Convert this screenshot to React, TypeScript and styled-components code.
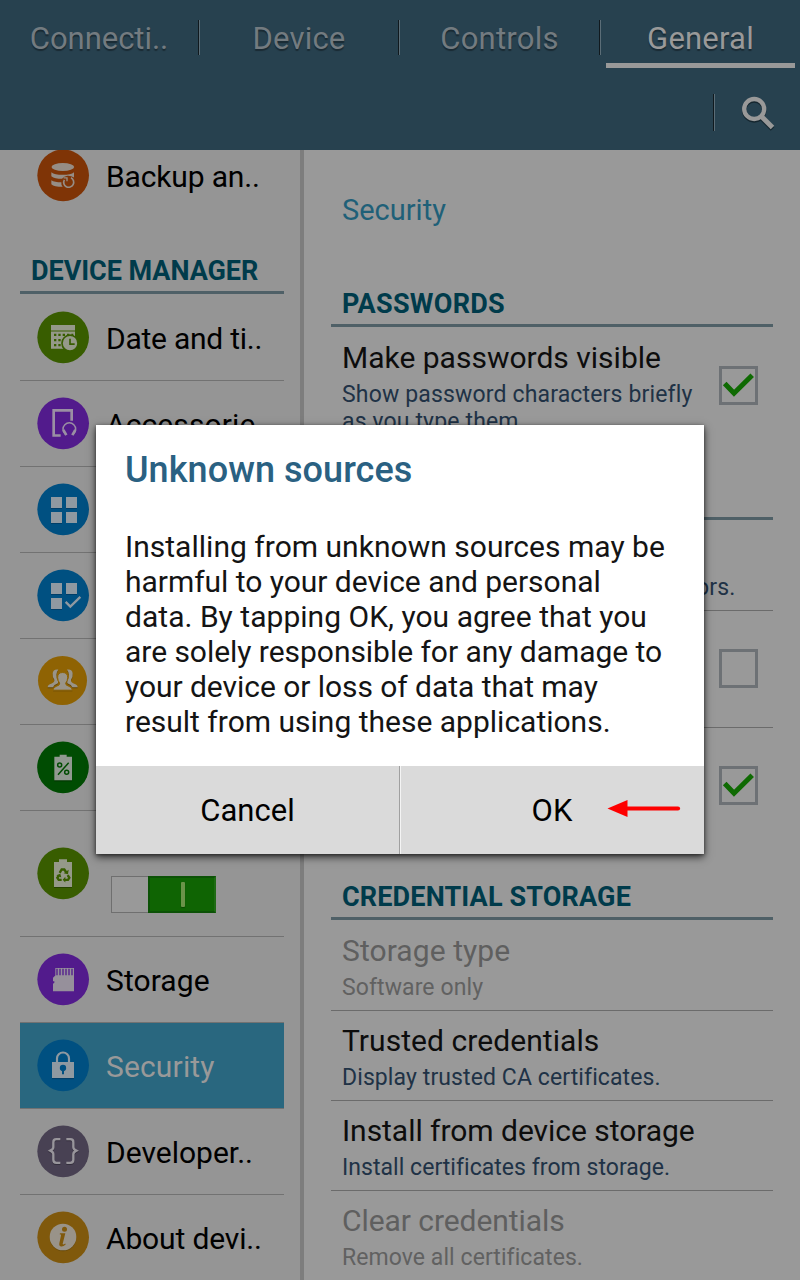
import React from 'react';
import styled, { createGlobalStyle } from 'styled-components';

const Global = createGlobalStyle`
  * { box-sizing: border-box; }
  body { margin: 0; background: #999; font-family: Roboto, sans-serif; }
`;

const Screen = styled.div`
  position: relative;
  width: 800px;
  height: 1280px;
  overflow: hidden;
  display: flex;
  flex-direction: column;
`;

const Header = styled.header`
  height: 150px;
  flex: none;
  background: #27414f;
  display: flex;
  flex-direction: column;
`;

const Tabs = styled.nav`
  display: flex;
  align-items: flex-start;
  height: 75px;
`;

const Divider = styled.div<{ $height: number; $top?: number }>`
  flex: none;
  width: 2px;
  height: ${p => p.$height}px;
  margin-top: ${p => p.$top ?? 0}px;
  background: linear-gradient(to right, #10191e 50%, #5b6d77 50%);
`;

const Tab = styled.div<{ $active?: boolean; $spacing: number }>`
  height: 63px;
  display: flex;
  justify-content: center;
  padding-top: 19px;
  font-size: 31px;
  line-height: 40px;
  letter-spacing: ${p => p.$spacing}px;
  white-space: nowrap;
  color: ${p => (p.$active ? '#999' : '#737b80')};
  text-shadow: 0 2px 1px rgba(0, 0, 0, 0.35);
`;

const TabCell = styled.div<{ $width: number; $active?: boolean }>`
  width: ${p => p.$width}px;
  display: flex;
  flex-direction: column;
  &::after {
    content: '';
    height: 5px;
    margin: 0 5px;
    background: ${p => (p.$active ? '#999' : 'transparent')};
  }
`;

const ActionBar = styled.div`
  height: 75px;
  display: flex;
  justify-content: flex-end;
  align-items: center;
  padding: 0 24px 0 0;
  gap: 25px;
`;

const Body = styled.div`
  flex: 1;
  min-height: 0;
  display: flex;
  overflow: hidden;
`;

const Sidebar = styled.aside`
  width: 304px;
  flex: none;
  background: #959595;
  border-right: 4px solid #7d7d7d;
  padding: 0 16px 0 20px;
`;

const NavRow = styled.div<{ $height?: number; $first?: boolean; $selected?: boolean; $plain?: boolean }>`
  display: flex;
  align-items: center;
  height: ${p => p.$height ?? 86}px;
  margin-top: ${p => (p.$first ? -17 : 0)}px;
  padding-left: 17px;
  gap: 17px;
  border-bottom: 1px solid ${p => (p.$plain ? 'transparent' : '#727272')};
  background: ${p => (p.$selected ? '#29677f' : 'transparent')};
  color: ${p => (p.$selected ? '#999' : '#000')};
`;

const NavLabel = styled.span<{ $spacing?: number }>`
  font-size: 30px;
  line-height: 36px;
  padding-top: 3px;
  white-space: nowrap;
  letter-spacing: ${p => p.$spacing ?? 0}px;
`;

const NavHeading = styled.h2`
  margin: 0 0 1px;
  height: 75px;
  padding: 35px 0 0 11px;
  border-bottom: 3px solid #4f6067;
  font-size: 27px;
  line-height: 34px;
  font-weight: 700;
  letter-spacing: -0.05px;
  color: #003b4b;
  white-space: nowrap;
`;

const Switch = styled.div`
  width: 105px;
  height: 37px;
  margin: 42px 0 0 5px;
  display: flex;
  justify-content: flex-end;
  border: 1px solid #6f6f6f;
  background: #999;
`;

const Knob = styled.div`
  margin: -1px;
  width: 68px;
  height: 37px;
  display: flex;
  align-items: center;
  justify-content: center;
  padding-left: 2px;
  background: #0f6403;
  border: 2px solid #0c5206;
  border-right-color: #1f6b14;
  &::after {
    content: '';
    width: 4px;
    height: 25px;
    border-radius: 1px;
    background: #6b9349;
    box-shadow: 0 1px 1px #0b4a02;
  }
`;

const Content = styled.main`
  flex: 1;
  background: #999;
  padding: 0 27px;
`;

const PageTitle = styled.h1`
  margin: 0;
  height: 100px;
  padding: 41px 0 0 11px;
  font-size: 29px;
  line-height: 38px;
  font-weight: 400;
  color: #1f6078;
`;

const Section = styled.h2<{ $height: number; $spacing?: number }>`
  margin: 0;
  height: ${p => p.$height}px;
  display: flex;
  align-items: flex-end;
  padding: 0 0 3px 11px;
  border-bottom: 3px solid #4f6067;
  font-size: 27px;
  line-height: 34px;
  font-weight: 700;
  letter-spacing: ${p => p.$spacing ?? 0}px;
  color: #003b4b;
  white-space: nowrap;
`;

const Pref = styled.div<{ $height: number; $last?: boolean; $disabled?: boolean }>`
  height: ${p => p.$height}px;
  display: flex;
  align-items: flex-start;
  justify-content: space-between;
  padding: 0 15px 0 11px;
  border-bottom: 1px solid ${p => (p.$last ? 'transparent' : '#6b6b6b')};
  color: ${p => (p.$disabled ? '#5f5f5f' : '#0d0d0d')};
`;

const PrefText = styled.div<{ $top?: number }>`
  flex: 1;
  padding-top: ${p => p.$top ?? 11}px;
`;

const PrefTitle = styled.div<{ $spacing?: number }>`
  font-size: 30px;
  line-height: 38px;
  height: 38px;
  white-space: nowrap;
  letter-spacing: ${p => p.$spacing ?? 0}px;
`;

const Summary = styled.div<{ $disabled?: boolean; $spacing?: number }>`
  font-size: 23px;
  line-height: 27px;
  padding-top: 4px;
  color: ${p => (p.$disabled ? '#616161' : '#203246')};
  white-space: nowrap;
  letter-spacing: ${p => p.$spacing ?? 0.1}px;
`;

const CheckBox = styled.div<{ $top: number }>`
  flex: none;
  width: 39px;
  height: 39px;
  margin-top: ${p => p.$top}px;
  border: 3px solid #6d7175;
  svg { display: block; }
`;

const Dialog = styled.section`
  position: absolute;
  left: 96px;
  top: 425px;
  width: 608px;
  height: 429px;
  display: flex;
  flex-direction: column;
  background: #fff;
  box-shadow: 0 3px 8px rgba(0, 0, 0, 0.7), 0 1px 3px rgba(0, 0, 0, 0.4);
`;

const DialogTitle = styled.h2`
  margin: 0;
  padding: 23px 29px 0;
  height: 104px;
  font-size: 36px;
  line-height: 44px;
  font-weight: 500;
  letter-spacing: 0.06px;
  color: #2a6182;
`;

const DialogText = styled.p`
  margin: 0;
  flex: 1;
  padding: 0 29px;
  font-size: 30px;
  line-height: 35px;
  color: #141414;
  white-space: nowrap;
`;

const Line = styled.span<{ $spacing: number }>`
  display: block;
  letter-spacing: ${p => p.$spacing}px;
`;

const Buttons = styled.div`
  display: grid;
  grid-template-columns: 304px 304px;
  height: 88px;
`;

const Button = styled.div<{ $first?: boolean }>`
  position: relative;
  display: flex;
  align-items: center;
  justify-content: center;
  font-size: 31px;
  line-height: 36px;
  padding-top: 2px;
  padding-right: ${p => (p.$first ? 0 : 1)}px;
  color: #000;
  background: #dadada;
  border-right: ${p => (p.$first ? '1px solid #a0a0a0' : '0')};
  border-left: ${p => (p.$first ? '0' : '1px solid #f4f4f4')};
`;

const Arrow = styled.svg`
  position: absolute;
  left: 205px;
  top: 32px;
`;

const BadgeSvg = styled.svg`
  flex: none;
  overflow: visible;
`;

const Badge = ({ color, r = 77.5, cx = 77.5, cy = 77.5, children }: any) => (
  <BadgeSvg width="52" height="52" viewBox="-1 1.500 156 156">
    <circle cx={cx} cy={cy} r={r} fill={color} />
    {children}
  </BadgeSvg>
);

const Backup = () => (
  <Badge color="#7f3406">
    <g fill="#968d85">
      <ellipse cx="76.5" cy="52.5" rx="34" ry="12" />
      <path d="M42 68Q52 76 76 76Q101 76 110 68V84Q100 78 90 79Q80 80 74 88Q52 88 42 80Z" />
      <path d="M42 92Q52 98 72 98Q71 106 76 112Q50 112 42 104Z" />
    </g>
    <path d="M101 85A15 15 0 1 1 81 91" fill="none" stroke="#968d85" strokeWidth="5" />
    <path d="M79 85H89V95" fill="none" stroke="#968d85" strokeWidth="4" />
  </Badge>
);

const DateTime = () => (
  <Badge color="#385d00">
    <path fill="#959989" d="M41 40.500H113V57H41ZM41 60H113V112H41Z" />
    <path stroke="#385d00" strokeWidth="7" strokeDasharray="7 6" d="M50 70H108M50 86H84M50 101H76" />
    <circle cx="98" cy="95" r="24" fill="#959989" stroke="#385d00" strokeWidth="5" />
    <path d="M98 82V98H112" fill="none" stroke="#385d00" strokeWidth="5" />
  </Badge>
);

const Accessory = () => (
  <Badge color="#521b8c">
    <path d="M70 114H49V38.500H103V70" fill="none" stroke="#9a8fa3" strokeWidth="8" />
    <path d="M85 111Q77 104 77 95A19 19 0 0 1 115 95Q115 104 107 111" fill="none" stroke="#9a8fa3" strokeWidth="4.500" />
    <path d="M78 97L87 113M114 97L105 113" stroke="#9a8fa3" strokeWidth="8" />
  </Badge>
);

const Squares = ({ checked }: { checked?: boolean }) => (
  <Badge color="#005081">
    <path transform="translate(0 3)" fill="#003e68" d="M41 40.500H74V73.500H41ZM86 40.500H119V73.500H86ZM41 85.500H74V118.500H41Z" />
    <path fill="#8f99a1" d="M41 40.500H74V73.500H41ZM86 40.500H119V73.500H86ZM41 85.500H74V118.500H41Z" />
    {checked ? (
      <path d="M85 97L99 111L129 82" fill="none" stroke="#8f99a1" strokeWidth="7" />
    ) : (
      <path fill="#8f99a1" d="M86 85.500H119V118.500H86Z" />
    )}
  </Badge>
);

const Users = () => {
  const side = 'M63 42Q47 40 46 54Q45 66 51 73Q52 81 43 84Q31 88 31 95H47Q50 88 59 85Q64 83 62 77Q56 70 57 58Q58 49 63 42Z';
  const person =
    'M76 51Q61 51 61 66Q61 76 67 83Q67 90 58 92Q47 95 47 104H105Q105 95 94 92Q85 90 85 83Q91 76 91 66Q91 51 76 51Z';
  return (
    <Badge color="#8f6303" r={73.5} cx={75.5} cy={75}>
      <g transform="translate(0 3)" fill="#654605">
        <path d={side} />
        <path d={side} transform="matrix(-1 0 0 1 152 0)" />
        <path d={person} />
      </g>
      <g fill="#999489">
        <path d={side} />
        <path d={side} transform="matrix(-1 0 0 1 152 0)" />
      </g>
      <path d={person} fill="#999489" stroke="#8f6303" strokeWidth="3" />
    </Badge>
  );
};

const Battery = () => (
  <Badge color="#004c02" cx={77}>
    <path fill="#003800" d="M51 113H104V120H51Z" />
    <path fill="#919991" d="M51 45.500H67V40H88V45.500H104V116.500H51Z" />
    <g fill="none" stroke="#004c02" strokeWidth="4.500">
      <circle cx="67" cy="70.500" r="6" />
      <circle cx="88" cy="92.500" r="6" />
      <path d="M94 64L62 100" />
    </g>
  </Badge>
);

const PowerSaving = () => (
  <Badge color="#385d00">
    <path fill="#243f00" d="M50 116H104V121H50Z" />
    <path fill="#959989" d="M50 43.500H65V35.500H89V43.500H104V118.500H50Z" />
    <g fill="none" stroke="#385d00" strokeWidth="7">
      <path d="M67 76L73 66H81L87 75" />
      <path d="M91 83L96 91L92 97H82" />
      <path d="M73 97H64L60 91L65 84" />
    </g>
    <path fill="#385d00" d="M79 77L92 80L94 67ZM84 88V105L76 97ZM57 83L69 79L72 90Z" />
  </Badge>
);

const SdCard = () => (
  <Badge color="#521b8c">
    <path fill="#96909b" d="M54 43.500H110V113H47V91L51 88V83H47V73L54 66Z" />
    <path stroke="#521b8c" strokeWidth="4" d="M59 46V65M68 46V65M77 46V65M86 46V65M95 46V65M104 46V65" />
  </Badge>
);

const Lock = () => (
  <Badge color="#005081">
    <path d="M59 70V57A18 18 0 0 1 95 57V70" fill="none" stroke="#8f99a1" strokeWidth="6.500" />
    <path fill="#003e68" d="M44 113H110V119H44Z" />
    <path fill="#8f99a1" d="M44 67.500H110V115.500H44Z" />
    <circle cx="77" cy="85.500" r="9.500" fill="#005081" />
    <path d="M77 88V104" stroke="#005081" strokeWidth="6" />
  </Badge>
);

const Braces = () => {
  const d = 'M69 41H57Q48 41 48 50V65Q48 71 39 75.500Q48 80 48 86V103Q48 112 57 112H69M87 41H99Q108 41 108 50V65Q108 71 117 75.500Q108 80 108 86V103Q108 112 99 112H87';
  return (
    <Badge color="#484153">
      <path transform="translate(0 3)" d={d} fill="none" stroke="#342f3d" strokeWidth="7" />
      <path d={d} fill="none" stroke="#98959b" strokeWidth="7" />
    </Badge>
  );
};

const Info = () => (
  <Badge color="#80590c">
    <circle cx="77" cy="79" r="40" fill="#674909" />
    <circle cx="77" cy="76.500" r="40" fill="#999389" />
    <circle cx="81.500" cy="53" r="7.500" fill="#80590c" />
    <path fill="#80590c" d="M68 65H84L76 97Q76 101 84 96L85 99Q76 107 69 104Q64 102 66 95L71 72Q72 68 67 68Z" />
  </Badge>
);

const Search = () => (
  <svg width="36" height="36" viewBox="0 0 36 36">
    <g transform="translate(0 1.500)" fill="none" stroke="#15262f" strokeWidth="4.300">
      <circle cx="14.200" cy="14" r="10" />
      <path d="M21 21L32.500 32.500" strokeWidth="5" />
    </g>
    <g fill="none" stroke="#999" strokeWidth="4.300">
      <circle cx="14.200" cy="14" r="10" />
      <path d="M21 21L32.500 32.500" strokeWidth="5" />
    </g>
  </svg>
);

const Check = ({ on, top }: { on?: boolean; top: number }) => (
  <CheckBox $top={top}>
    {on && (
      <svg width="33" height="33" viewBox="0 0 33 33">
        <path d="M2.700 14.500L12 24.200L30.200 6.300" fill="none" stroke="#0f6a03" strokeWidth="5" />
      </svg>
    )}
  </CheckBox>
);

const lines: [string, number][] = [
  ['Installing from unknown sources may be', 0.02],
  ['harmful to your device and personal', -0.03],
  ['data. By tapping OK, you agree that you', 0.03],
  ['are solely responsible for any damage to', -0.04],
  ['your device or loss of data that may', -0.05],
  ['result from using these applications.', 0],
];

export default function App() {
  return (
    <Screen>
      <Global />
      <Header>
        <Tabs>
          <TabCell $width={198}><Tab $spacing={-0.05}>Connecti..</Tab></TabCell>
          <Divider $height={35} $top={20} />
          <TabCell $width={198}><Tab $spacing={0.2}>Device</Tab></TabCell>
          <Divider $height={35} $top={20} />
          <TabCell $width={199}><Tab $spacing={0.25}>Controls</Tab></TabCell>
          <Divider $height={35} $top={20} />
          <TabCell $width={199} $active><Tab $active $spacing={0.2}>General</Tab></TabCell>
        </Tabs>
        <ActionBar>
          <Divider $height={37} />
          <Search />
        </ActionBar>
      </Header>
      <Body>
        <Sidebar>
          <NavRow $first $plain>
            <Backup />
            <NavLabel $spacing={-0.15}>Backup an..</NavLabel>
          </NavRow>
          <NavHeading>DEVICE MANAGER</NavHeading>
          <NavRow><DateTime /><NavLabel $spacing={-0.25}>Date and ti..</NavLabel></NavRow>
          <NavRow><Accessory /><NavLabel $spacing={0.12}>Accessorie..</NavLabel></NavRow>
          <NavRow><Squares /></NavRow>
          <NavRow><Squares checked /></NavRow>
          <NavRow><Users /></NavRow>
          <NavRow><Battery /></NavRow>
          <NavRow $height={126}>
            <PowerSaving />
            <Switch><Knob /></Switch>
          </NavRow>
          <NavRow><SdCard /><NavLabel $spacing={0.08}>Storage</NavLabel></NavRow>
          <NavRow $selected><Lock /><NavLabel $spacing={0.15}>Security</NavLabel></NavRow>
          <NavRow><Braces /><NavLabel>Developer..</NavLabel></NavRow>
          <NavRow $plain><Info /><NavLabel $spacing={-0.15}>About devi..</NavLabel></NavRow>
        </Sidebar>
        <Content>
          <PageTitle>Security</PageTitle>
          <Section $height={77} $spacing={0.3}>PASSWORDS</Section>
          <Pref $height={117} $last>
            <PrefText $top={12}>
              <PrefTitle>Make passwords visible</PrefTitle>
              <Summary $spacing={0.16}>Show password characters briefly<br />as you type them.</Summary>
            </PrefText>
            <Check on top={39} />
          </Pref>
          <Section $height={76} />
          <Pref $height={91}>
            <PrefText $top={12}>
              <PrefTitle />
              <Summary $spacing={0.14}>View or disable device administrators.</Summary>
            </PrefText>
          </Pref>
          <Pref $height={117}>
            <PrefText />
            <Check top={38} />
          </Pref>
          <Pref $height={117} $last>
            <PrefText />
            <Check on top={38} />
          </Pref>
          <Section $height={75} $spacing={0.15}>CREDENTIAL STORAGE</Section>
          <Pref $height={91} $disabled>
            <PrefText $top={12}>
              <PrefTitle $spacing={0.08}>Storage type</PrefTitle>
              <Summary $disabled>Software only</Summary>
            </PrefText>
          </Pref>
          <Pref $height={90}>
            <PrefText>
              <PrefTitle $spacing={0.06}>Trusted credentials</PrefTitle>
              <Summary>Display trusted CA certificates.</Summary>
            </PrefText>
          </Pref>
          <Pref $height={90}>
            <PrefText>
              <PrefTitle $spacing={-0.04}>Install from device storage</PrefTitle>
              <Summary $spacing={0.04}>Install certificates from storage.</Summary>
            </PrefText>
          </Pref>
          <Pref $height={90} $disabled $last>
            <PrefText>
              <PrefTitle $spacing={-0.06}>Clear credentials</PrefTitle>
              <Summary $disabled $spacing={0.07}>Remove all certificates.</Summary>
            </PrefText>
          </Pref>
        </Content>
      </Body>
      <Dialog>
        <DialogTitle>Unknown sources</DialogTitle>
        <DialogText>
          {lines.map(([text, spacing]) => (
            <Line key={text} $spacing={spacing}>{text}</Line>
          ))}
        </DialogText>
        <Buttons>
          <Button $first>Cancel</Button>
          <Button>
            OK
            <Arrow width="76" height="20" viewBox="0 0 76 20">
              <path d="M20 10.500H72" stroke="#fe0000" strokeWidth="4.200" strokeLinecap="round" />
              <path d="M1.500 10.500L21.500 2V19Z" fill="#fe0000" />
            </Arrow>
          </Button>
        </Buttons>
      </Dialog>
    </Screen>
  );
}
